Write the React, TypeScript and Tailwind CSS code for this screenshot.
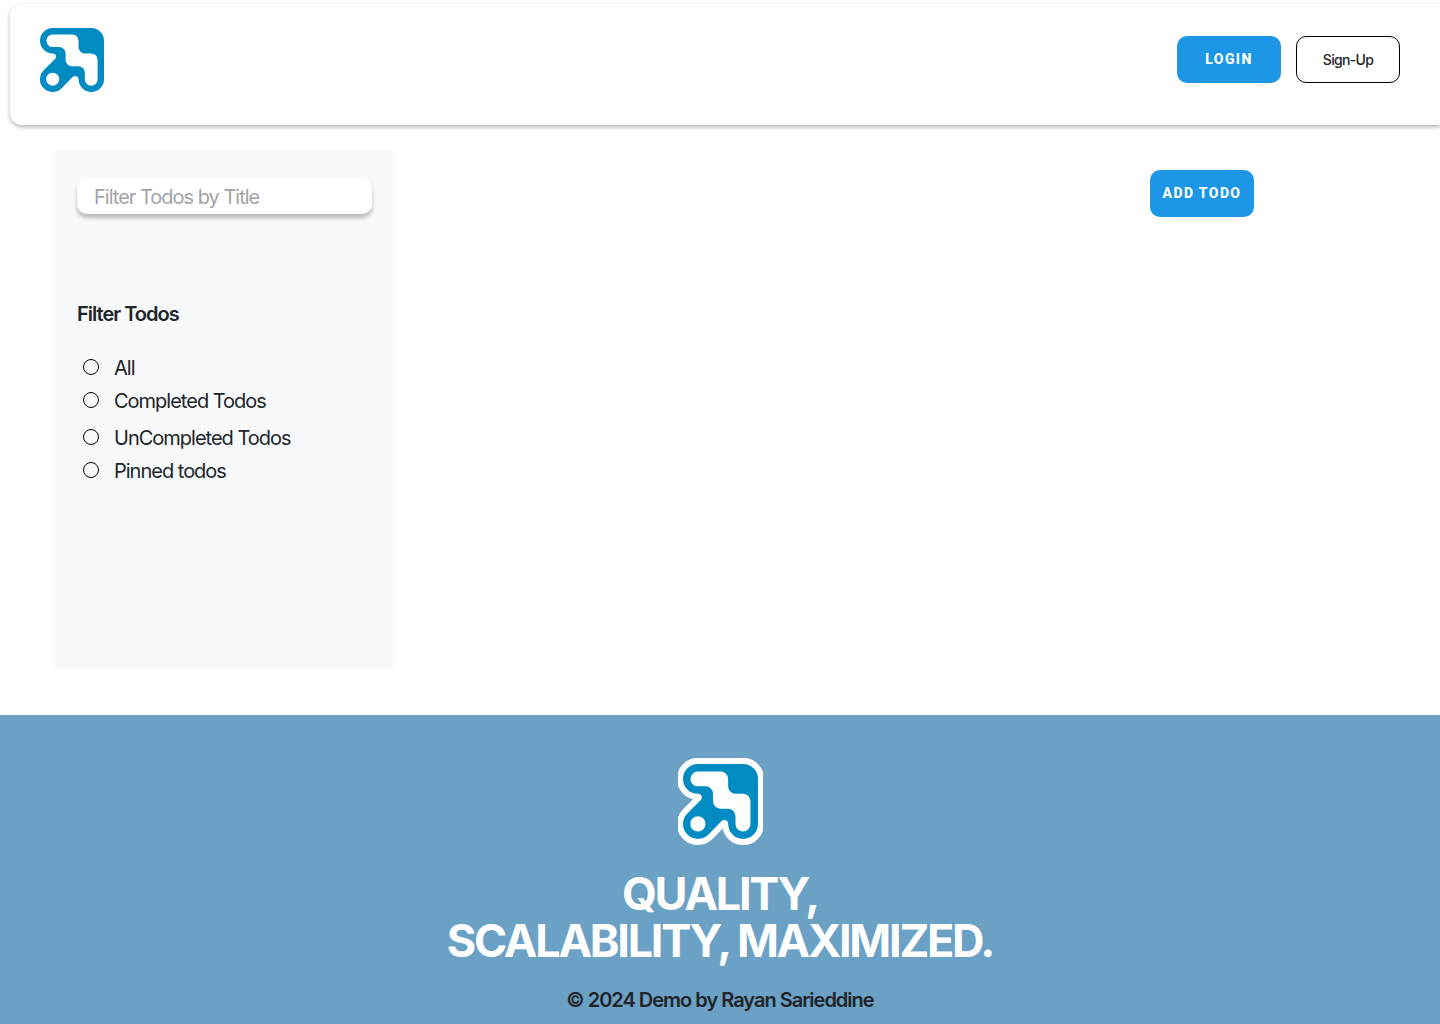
import React from "react";

const BODY =
  "M12.7 0H51.3A12.7 12.7 0 0 1 64 12.7V51.3A12.7 12.7 0 0 1 38.6 51.3C38.6 48 34.8 46.8 32.6 49L21.7 60.3A12.7 12.7 0 0 1 3.7 42.3L14.8 31.2C17.2 28.8 16 25.4 12.7 25.4A12.7 12.7 0 0 1 12.7 0Z";
const STEPS =
  "M12.7 6.4H32.2A6.3 6.3 0 0 1 38.5 12.7V19A6.3 6.3 0 0 0 44.8 25.4H51.3A6.3 6.3 0 0 1 57.6 31.7V51.3A6.4 6.4 0 0 1 44.8 51.3V44.5A6.3 6.3 0 0 0 38.5 38.2H32A6.3 6.3 0 0 1 25.6 31.9V25.4A6.3 6.3 0 0 0 19.3 19.1H12.7A6.3 6.3 0 0 1 12.7 6.4Z";

function Logo({ className, outlined = false }: { className: string; outlined?: boolean }) {
  return (
    <svg
      className={className}
      viewBox={outlined ? "-4.3 -5.1 72.6 75.1" : "0 0 64 64"}
      role="img"
      aria-label="Logo"
    >
      {outlined && (
        <path d={BODY} fill="#fff" stroke="#fff" strokeWidth="10.4" strokeLinejoin="round" />
      )}
      <path d={BODY} fill="#008cc3" />
      <path d={STEPS} fill="#fff" />
      <circle cx="12.7" cy="51.2" r="6.5" fill="#fff" />
    </svg>
  );
}

function PrimaryButton({ children }: { children: React.ReactNode }) {
  return (
    <button
      type="button"
      className="h-[47px] w-[104px] rounded-[10px] bg-[#1c96e5] pb-0.5 font-[Roboto,sans-serif] text-sm font-extrabold tracking-widest text-white"
    >
      {children}
    </button>
  );
}

function FilterOption({ label }: { label: string }) {
  return (
    <label className="flex h-[33px] items-center gap-[15px] pl-1.5">
      <input
        type="radio"
        name="filter"
        className="mb-0.5 size-4 shrink-0 appearance-none rounded-full border border-black checked:border-4"
      />
      {label}
    </label>
  );
}

export default function App() {
  return (
    <div className="flex min-h-screen flex-col bg-white font-[Inter,sans-serif] text-xl tracking-tighter text-[#212529]">
      <header className="mt-1 ml-2.5 flex items-start justify-between rounded-l-xl bg-white pt-6 pr-10 pb-[33px] pl-[30px] shadow-[0_2px_4px_rgba(0,0,0,0.3)]">
        <a href="#">
          <Logo className="size-16" />
        </a>
        <div className="flex gap-[15px] pt-2">
          <PrimaryButton>LOGIN</PrimaryButton>
          <button
            type="button"
            className="h-[47px] w-[104px] rounded-[10px] border border-black bg-white text-sm font-medium tracking-tighter"
          >
            Sign-Up
          </button>
        </div>
      </header>

      <main className="flex items-start justify-between pt-[25px] pr-[186px] pb-[47px] pl-[55px]">
        <aside className="min-h-[518px] w-[338px] bg-[#f8f9fb] px-[22px] pt-7">
          <input
            type="text"
            aria-label="Filter Todos by Title"
            placeholder="Filter Todos by Title"
            className="block h-9 w-[295px] rounded-[10px] bg-white px-[17px] pt-0.5 tracking-tighter shadow-[0_4px_4px_rgba(0,0,0,0.25)] outline-none placeholder:text-[#a0a4a8]"
          />
          <fieldset className="mt-[85px]">
            <legend className="mb-[22px] font-semibold leading-[30px]">Filter Todos</legend>
            <FilterOption label="All" />
            <FilterOption label="Completed Todos" />
            <div className="mt-1">
              <FilterOption label="UnCompleted Todos" />
              <FilterOption label="Pinned todos" />
            </div>
          </fieldset>
        </aside>
        <div className="pt-5">
          <PrimaryButton>ADD TODO</PrimaryButton>
        </div>
      </main>

      <footer className="flex grow flex-col items-center bg-[#6aa1c5] pt-[43px] text-center">
        <Logo outlined className="h-[88px] w-[85px]" />
        <h2 className="mt-6 text-[45px] font-bold leading-[47px] tracking-tighter text-white">
          QUALITY,
          <br />
          SCALABILITY, MAXIMIZED.
        </h2>
        <p className="mt-[21px] font-semibold leading-[30px]">© 2024 Demo by Rayan Sarieddine</p>
      </footer>
    </div>
  );
}
